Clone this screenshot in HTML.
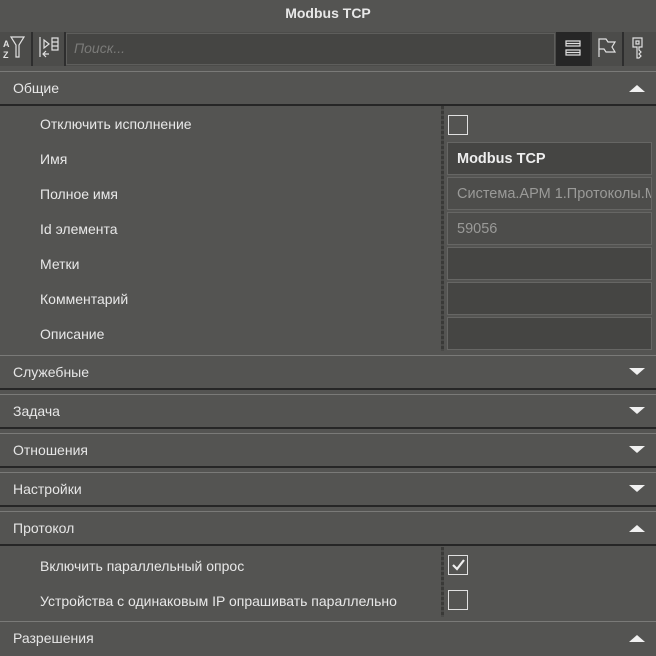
<!DOCTYPE html>
<html><head><meta charset="utf-8"><style>
body{margin:0;width:656px;height:654px;background:#545452;overflow:hidden;font-family:"Liberation Sans","DejaVu Sans",sans-serif;color:#e6e6e6;position:relative}
div{position:absolute;box-sizing:border-box}
.t{font-size:14px;white-space:nowrap}
.hdr{left:0;width:656px;height:35px;border-top:1px solid #7a7a78;border-bottom:2px solid #262626}
.hdr span{position:absolute;left:13px;top:8px;font-size:14px}
.up,.dn{position:absolute;right:11px;width:0;height:0;border-left:8px solid transparent;border-right:8px solid transparent}
.up{top:13px;border-bottom:7px solid #f0f0f0}
.dn{top:12px;border-top:7px solid #f0f0f0}
.lbl{left:40px;font-size:14px;color:#e8e8e8}
.box{left:447px;width:205px;height:33px;border:1px solid #666664;background:#454543;font-size:14.5px;padding:8px 0 0 9px;white-space:nowrap;overflow:hidden}
.cb{left:448px;width:20px;height:20px;border:1.5px solid #e0e0e0}
.sep{left:441px;width:3px;background:repeating-linear-gradient(#3a3a38 0 3px,#4a4a48 3px 5px)}
</style></head><body>
<div class="t" style="left:0;width:656px;top:5px;text-align:center;font-size:14px;color:#e8e8e8;font-weight:600">Modbus TCP</div>
<!-- toolbar -->
<div style="left:0;top:32px;width:656px;height:34px;background:#4c4c4a"></div>
<div style="left:31px;top:32px;width:2px;height:34px;background:#2e2e2e"></div>
<div style="left:64px;top:32px;width:2px;height:34px;background:#2e2e2e"></div>
<div style="left:66px;top:33px;width:489px;height:32px;background:#454543;border:1px solid #5e5e5c"></div>
<div class="t" style="left:74px;top:40px;color:#7a7a78;font-style:italic">Поиск...</div>
<div style="left:556px;top:32px;width:34px;height:34px;background:#262626"></div>
<div style="left:590px;top:32px;width:2px;height:34px;background:#2e2e2e"></div>
<div style="left:622px;top:32px;width:2px;height:34px;background:#2e2e2e"></div>
<svg style="position:absolute;left:0;top:32px" width="656" height="34" fill="none" stroke="#e0e0e0" stroke-width="1.2">
<text x="3" y="15" font-size="9" fill="#e0e0e0" stroke="none" font-family="Liberation Sans" font-weight="bold">A</text>
<text x="3" y="26" font-size="9" fill="#e0e0e0" stroke="none" font-family="Liberation Sans" font-weight="bold">Z</text>
<path d="M11 5h13l-5 8v12h-3V13z"/>
<path d="M40 5v20M44 8l5 4-5 4zM52 6h6v12h-6zM52 10h6M52 14h6M49 22h-6M46 19l-3 3 3 3"/>
<path d="M566 9h14v5h-14zM566 18h14v5h-14zM566 11.5h14M566 20.5h14"/>
<path d="M599 25V7h7l2 3h7l-3 5 3 5h-9l-2-3h-5"/>
<path d="M633 6h9v9h-3v3l2 2-2 2 2 2-2 2h-2V15h-4z"/>
<path d="M636 9h3v3h-3z"/>
</svg>
<!-- Общие -->
<div class="hdr" style="top:71px"><span>Общие</span><i class="up"></i></div>
<div class="sep" style="top:106px;height:245px"></div>
<div class="lbl" style="top:116px">Отключить исполнение</div>
<div class="cb" style="top:115px"></div>
<div class="lbl" style="top:151px">Имя</div>
<div class="box" style="top:142px;font-weight:bold;color:#eee">Modbus TCP</div>
<div class="lbl" style="top:186px">Полное имя</div>
<div class="box" style="top:177px;background:#4d4d4b;color:#9a9a98">Система.АРМ 1.Протоколы.Modbus TCP</div>
<div class="lbl" style="top:221px">Id элемента</div>
<div class="box" style="top:212px;background:#4d4d4b;color:#9a9a98">59056</div>
<div class="lbl" style="top:256px">Метки</div>
<div class="box" style="top:247px"></div>
<div class="lbl" style="top:291px">Комментарий</div>
<div class="box" style="top:282px"></div>
<div class="lbl" style="top:326px">Описание</div>
<div class="box" style="top:317px"></div>
<div class="hdr" style="top:355px"><span>Служебные</span><i class="dn"></i></div>
<div class="hdr" style="top:394px"><span>Задача</span><i class="dn"></i></div>
<div class="hdr" style="top:433px"><span>Отношения</span><i class="dn"></i></div>
<div class="hdr" style="top:472px"><span>Настройки</span><i class="dn"></i></div>
<div class="hdr" style="top:511px"><span>Протокол</span><i class="up"></i></div>
<div class="sep" style="top:547px;height:70px"></div>
<div class="lbl" style="top:558px">Включить параллельный опрос</div>
<div class="cb" style="top:555px"></div>
<svg style="position:absolute;left:448px;top:555px" width="20" height="20"><path d="M5 10l4 4 7-9" stroke="#eee" stroke-width="2.2" fill="none"/></svg>
<div class="lbl" style="top:593px">Устройства с одинаковым IP опрашивать параллельно</div>
<div class="cb" style="top:590px"></div>
<div class="hdr" style="top:621px;border-bottom:none"><span>Разрешения</span><i class="up"></i></div>
</body></html>
